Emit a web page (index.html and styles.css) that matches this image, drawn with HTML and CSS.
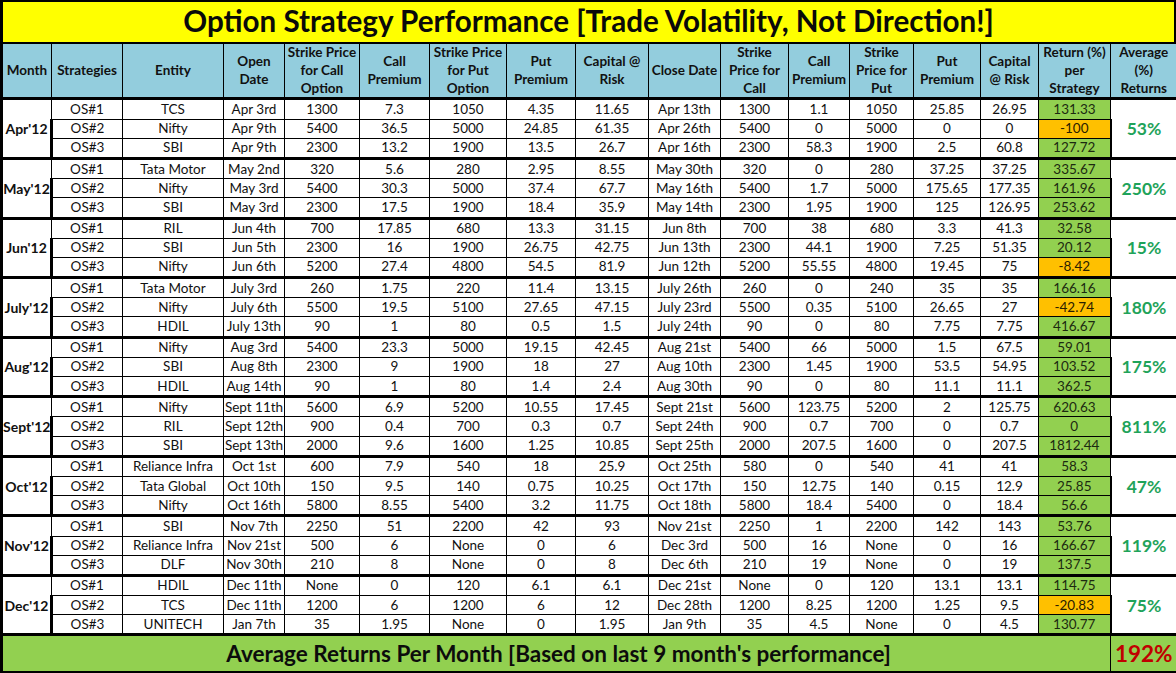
FILE: index.html
```html
<!DOCTYPE html>
<html>
<head>
<meta charset="utf-8">
<title>Option Strategy Performance</title>
<link rel="stylesheet" href="styles.css">
</head>
<body>
<div class="sheet">
<div class="title">Option Strategy Performance [Trade Volatility, Not Direction!]</div>
<table class="grid">
<colgroup>
<col style="width:50px"><col style="width:71px"><col style="width:101px"><col style="width:61px"><col style="width:75px"><col style="width:70px"><col style="width:77px"><col style="width:69px"><col style="width:73px"><col style="width:72px"><col style="width:68px"><col style="width:61px"><col style="width:64px"><col style="width:67px"><col style="width:58px"><col style="width:72px"><col style="width:67px">
</colgroup>
<thead>
<tr class="head">
<th>Month</th><th>Strategies</th><th>Entity</th><th>Open<br>Date</th><th>Strike Price<br>for Call<br>Option</th><th>Call<br>Premium</th><th>Strike Price<br>for Put<br>Option</th><th>Put<br>Premium</th><th>Capital @<br>Risk</th><th>Close Date</th><th>Strike<br>Price for<br>Call</th><th>Call<br>Premium</th><th>Strike<br>Price for<br>Put</th><th>Put<br>Premium</th><th>Capital<br>@ Risk</th><th>Return (%)<br>per<br>Strategy</th><th>Average<br>(%)<br>Returns</th>
</tr>
</thead>
<tbody>
<tr class="first"><td class="month" rowspan="3">Apr'12</td><td>OS#1</td><td>TCS</td><td>Apr 3rd</td><td>1300</td><td>7.3</td><td>1050</td><td>4.35</td><td>11.65</td><td>Apr 13th</td><td>1300</td><td>1.1</td><td>1050</td><td>25.85</td><td>26.95</td><td class="ret">131.33</td><td class="avg" rowspan="3">53%</td></tr>
<tr><td>OS#2</td><td>Nifty</td><td>Apr 9th</td><td>5400</td><td>36.5</td><td>5000</td><td>24.85</td><td>61.35</td><td>Apr 26th</td><td>5400</td><td>0</td><td>5000</td><td>0</td><td>0</td><td class="ret neg">-100</td></tr>
<tr><td>OS#3</td><td>SBI</td><td>Apr 9th</td><td>2300</td><td>13.2</td><td>1900</td><td>13.5</td><td>26.7</td><td>Apr 16th</td><td>2300</td><td>58.3</td><td>1900</td><td>2.5</td><td>60.8</td><td class="ret">127.72</td></tr>

<tr class="first"><td class="month" rowspan="3">May'12</td><td>OS#1</td><td>Tata Motor</td><td>May 2nd</td><td>320</td><td>5.6</td><td>280</td><td>2.95</td><td>8.55</td><td>May 30th</td><td>320</td><td>0</td><td>280</td><td>37.25</td><td>37.25</td><td class="ret">335.67</td><td class="avg" rowspan="3">250%</td></tr>
<tr><td>OS#2</td><td>Nifty</td><td>May 3rd</td><td>5400</td><td>30.3</td><td>5000</td><td>37.4</td><td>67.7</td><td>May 16th</td><td>5400</td><td>1.7</td><td>5000</td><td>175.65</td><td>177.35</td><td class="ret">161.96</td></tr>
<tr><td>OS#3</td><td>SBI</td><td>May 3rd</td><td>2300</td><td>17.5</td><td>1900</td><td>18.4</td><td>35.9</td><td>May 14th</td><td>2300</td><td>1.95</td><td>1900</td><td>125</td><td>126.95</td><td class="ret">253.62</td></tr>

<tr class="first"><td class="month" rowspan="3">Jun'12</td><td>OS#1</td><td>RIL</td><td>Jun 4th</td><td>700</td><td>17.85</td><td>680</td><td>13.3</td><td>31.15</td><td>Jun 8th</td><td>700</td><td>38</td><td>680</td><td>3.3</td><td>41.3</td><td class="ret">32.58</td><td class="avg" rowspan="3">15%</td></tr>
<tr><td>OS#2</td><td>SBI</td><td>Jun 5th</td><td>2300</td><td>16</td><td>1900</td><td>26.75</td><td>42.75</td><td>Jun 13th</td><td>2300</td><td>44.1</td><td>1900</td><td>7.25</td><td>51.35</td><td class="ret">20.12</td></tr>
<tr><td>OS#3</td><td>Nifty</td><td>Jun 6th</td><td>5200</td><td>27.4</td><td>4800</td><td>54.5</td><td>81.9</td><td>Jun 12th</td><td>5200</td><td>55.55</td><td>4800</td><td>19.45</td><td>75</td><td class="ret neg">-8.42</td></tr>

<tr class="first"><td class="month" rowspan="3">July'12</td><td>OS#1</td><td>Tata Motor</td><td>July 3rd</td><td>260</td><td>1.75</td><td>220</td><td>11.4</td><td>13.15</td><td>July 26th</td><td>260</td><td>0</td><td>240</td><td>35</td><td>35</td><td class="ret">166.16</td><td class="avg" rowspan="3">180%</td></tr>
<tr><td>OS#2</td><td>Nifty</td><td>July 6th</td><td>5500</td><td>19.5</td><td>5100</td><td>27.65</td><td>47.15</td><td>July 23rd</td><td>5500</td><td>0.35</td><td>5100</td><td>26.65</td><td>27</td><td class="ret neg">-42.74</td></tr>
<tr><td>OS#3</td><td>HDIL</td><td>July 13th</td><td>90</td><td>1</td><td>80</td><td>0.5</td><td>1.5</td><td>July 24th</td><td>90</td><td>0</td><td>80</td><td>7.75</td><td>7.75</td><td class="ret">416.67</td></tr>

<tr class="first"><td class="month" rowspan="3">Aug'12</td><td>OS#1</td><td>Nifty</td><td>Aug 3rd</td><td>5400</td><td>23.3</td><td>5000</td><td>19.15</td><td>42.45</td><td>Aug 21st</td><td>5400</td><td>66</td><td>5000</td><td>1.5</td><td>67.5</td><td class="ret">59.01</td><td class="avg" rowspan="3">175%</td></tr>
<tr><td>OS#2</td><td>SBI</td><td>Aug 8th</td><td>2300</td><td>9</td><td>1900</td><td>18</td><td>27</td><td>Aug 10th</td><td>2300</td><td>1.45</td><td>1900</td><td>53.5</td><td>54.95</td><td class="ret">103.52</td></tr>
<tr><td>OS#3</td><td>HDIL</td><td>Aug 14th</td><td>90</td><td>1</td><td>80</td><td>1.4</td><td>2.4</td><td>Aug 30th</td><td>90</td><td>0</td><td>80</td><td>11.1</td><td>11.1</td><td class="ret">362.5</td></tr>

<tr class="first"><td class="month" rowspan="3">Sept'12</td><td>OS#1</td><td>Nifty</td><td>Sept 11th</td><td>5600</td><td>6.9</td><td>5200</td><td>10.55</td><td>17.45</td><td>Sept 21st</td><td>5600</td><td>123.75</td><td>5200</td><td>2</td><td>125.75</td><td class="ret">620.63</td><td class="avg" rowspan="3">811%</td></tr>
<tr><td>OS#2</td><td>RIL</td><td>Sept 12th</td><td>900</td><td>0.4</td><td>700</td><td>0.3</td><td>0.7</td><td>Sept 24th</td><td>900</td><td>0.7</td><td>700</td><td>0</td><td>0.7</td><td class="ret">0</td></tr>
<tr><td>OS#3</td><td>SBI</td><td>Sept 13th</td><td>2000</td><td>9.6</td><td>1600</td><td>1.25</td><td>10.85</td><td>Sept 25th</td><td>2000</td><td>207.5</td><td>1600</td><td>0</td><td>207.5</td><td class="ret">1812.44</td></tr>

<tr class="first"><td class="month" rowspan="3">Oct'12</td><td>OS#1</td><td>Reliance Infra</td><td>Oct 1st</td><td>600</td><td>7.9</td><td>540</td><td>18</td><td>25.9</td><td>Oct 25th</td><td>580</td><td>0</td><td>540</td><td>41</td><td>41</td><td class="ret">58.3</td><td class="avg" rowspan="3">47%</td></tr>
<tr><td>OS#2</td><td>Tata Global</td><td>Oct 10th</td><td>150</td><td>9.5</td><td>140</td><td>0.75</td><td>10.25</td><td>Oct 17th</td><td>150</td><td>12.75</td><td>140</td><td>0.15</td><td>12.9</td><td class="ret">25.85</td></tr>
<tr><td>OS#3</td><td>Nifty</td><td>Oct 16th</td><td>5800</td><td>8.55</td><td>5400</td><td>3.2</td><td>11.75</td><td>Oct 18th</td><td>5800</td><td>18.4</td><td>5400</td><td>0</td><td>18.4</td><td class="ret">56.6</td></tr>

<tr class="first"><td class="month" rowspan="3">Nov'12</td><td>OS#1</td><td>SBI</td><td>Nov 7th</td><td>2250</td><td>51</td><td>2200</td><td>42</td><td>93</td><td>Nov 21st</td><td>2250</td><td>1</td><td>2200</td><td>142</td><td>143</td><td class="ret">53.76</td><td class="avg" rowspan="3">119%</td></tr>
<tr><td>OS#2</td><td>Reliance Infra</td><td>Nov 21st</td><td>500</td><td>6</td><td>None</td><td>0</td><td>6</td><td>Dec 3rd</td><td>500</td><td>16</td><td>None</td><td>0</td><td>16</td><td class="ret">166.67</td></tr>
<tr><td>OS#3</td><td>DLF</td><td>Nov 30th</td><td>210</td><td>8</td><td>None</td><td>0</td><td>8</td><td>Dec 6th</td><td>210</td><td>19</td><td>None</td><td>0</td><td>19</td><td class="ret">137.5</td></tr>

<tr class="first"><td class="month" rowspan="3">Dec'12</td><td>OS#1</td><td>HDIL</td><td>Dec 11th</td><td>None</td><td>0</td><td>120</td><td>6.1</td><td>6.1</td><td>Dec 21st</td><td>None</td><td>0</td><td>120</td><td>13.1</td><td>13.1</td><td class="ret">114.75</td><td class="avg" rowspan="3">75%</td></tr>
<tr><td>OS#2</td><td>TCS</td><td>Dec 11th</td><td>1200</td><td>6</td><td>1200</td><td>6</td><td>12</td><td>Dec 28th</td><td>1200</td><td>8.25</td><td>1200</td><td>1.25</td><td>9.5</td><td class="ret neg">-20.83</td></tr>
<tr><td>OS#3</td><td>UNITECH</td><td>Jan 7th</td><td>35</td><td>1.95</td><td>None</td><td>0</td><td>1.95</td><td>Jan 9th</td><td>35</td><td>4.5</td><td>None</td><td>0</td><td>4.5</td><td class="ret">130.77</td></tr>
</tbody>
<tfoot>
<tr class="foot"><td colspan="16" class="foot-label">Average Returns Per Month [Based on last 9 month's performance]</td><td class="foot-total">192%</td></tr>
</tfoot>
</table>
</div>
</body>
</html>
```
FILE: styles.css
```css
html, body {
  margin: 0;
  padding: 0;
  background: #ffffff;
}
body {
  font-family: Lato, "Liberation Sans", sans-serif;
  color: #111;
}
.sheet {
  width: 1176px;
  height: 673px;
  overflow: hidden;
}
.title {
  box-sizing: border-box;
  height: 42px;
  background: #ffff00;
  border-top: 2px solid #000;
  border-left: 3px solid #000;
  border-right: 2px solid #000;
  text-align: center;
  font-weight: 700;
  font-size: 29.6px;
  line-height: 38px;
  color: #0a0a0a;
  padding-left: 0;
}
.grid {
  width: 1176px;
  table-layout: fixed;
  border-collapse: collapse;
  font-size: 13.5px;
}
.grid td, .grid th {
  border: 1px solid #000;
  padding: 0;
  text-align: center;
  vertical-align: middle;
  white-space: nowrap;
  overflow: hidden;
}
.grid tbody td {
  height: 18.2px;
  line-height: 17px;
}
.head th {
  background: #93cddd;
  font-weight: 700;
  font-size: 13.5px;
  line-height: 17.8px;
  height: 53px;
  border-top: 2px solid #000;
  border-bottom: 2px solid #000;
}
.grid tr > :first-child {
  border-left: 3px solid #000;
}
.grid tr > :last-child {
  border-right: 2px solid #000;
}
.first td {
  border-top: 3px solid #000;
}
.month {
  font-weight: 700;
  font-size: 14px;
}
.ret {
  background: #92d050;
  color: #1c2a10;
}
.ret.neg {
  background: #ffc000;
  color: #2a2000;
}
.avg {
  font-weight: 700;
  font-size: 17.5px;
  color: #1fa35a;
}
.foot td {
  background: #92d050;
  height: 35px;
  border-top: 3px solid #000;
  border-bottom: 3px solid #000;
  font-weight: 700;
  font-size: 22.5px;
}
.foot .foot-label {
  color: #0c0c0c;
  padding-left: 4px;
}
.foot .foot-total {
  color: #c00000;
  background: #92d050;
}
```
